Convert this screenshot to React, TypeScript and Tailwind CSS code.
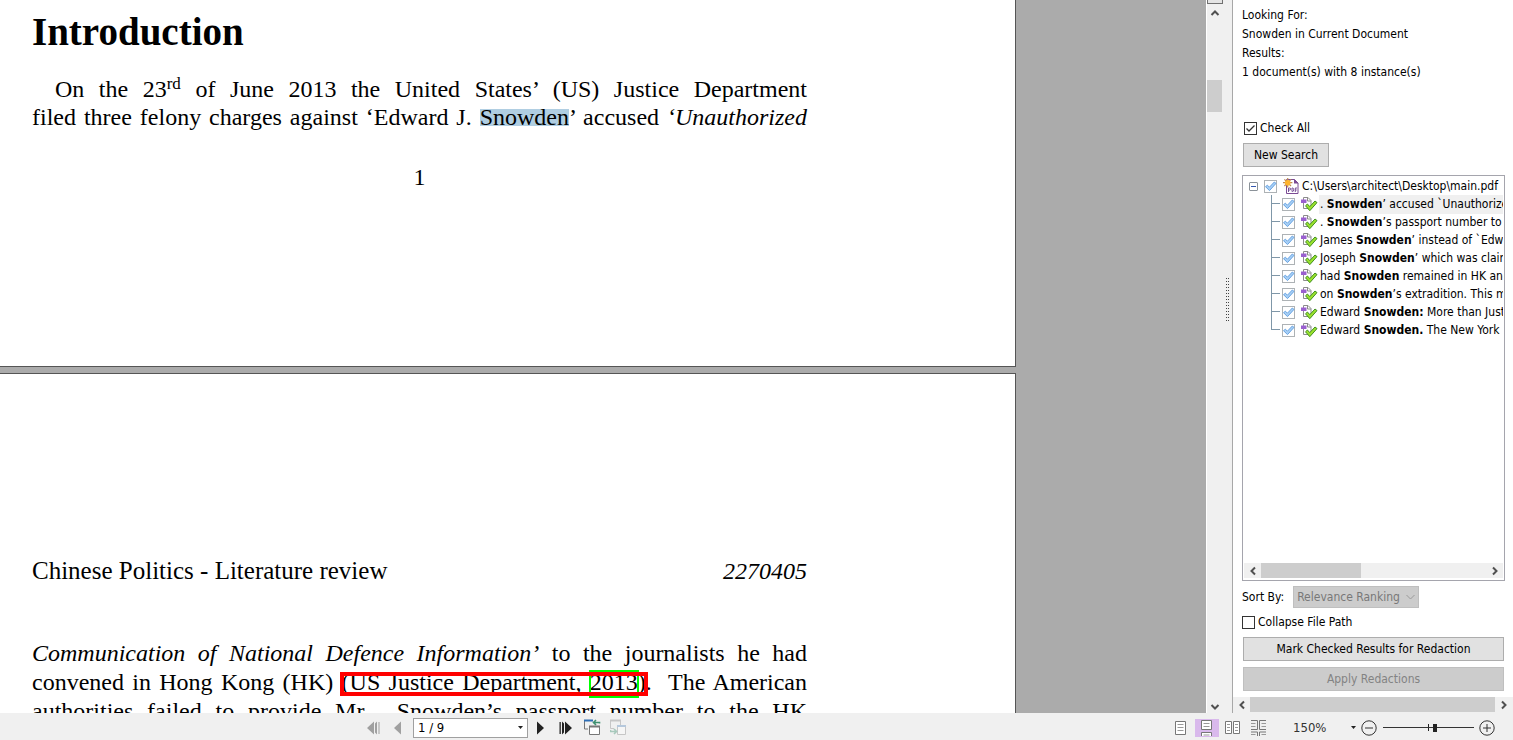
import type { ReactNode } from "react";

const UI = "font-['DejaVu_Sans_Condensed','Noto_Sans',sans-serif]";

type Instance = { before: string; match: string; after: string };

const INSTANCES: Instance[] = [
  { before: ". ", match: "Snowden", after: "’ accused `Unauthorized" },
  { before: ". ", match: "Snowden", after: "’s passport number to the" },
  { before: "James ", match: "Snowden", after: "’ instead of `Edward" },
  { before: "Joseph ", match: "Snowden", after: "’ which was claimed" },
  { before: "had ", match: "Snowden", after: " remained in HK and" },
  { before: "on ", match: "Snowden", after: "’s extradition. This meant" },
  { before: "Edward ", match: "Snowden:", after: " More than Just" },
  { before: "Edward ", match: "Snowden.", after: " The New York" },
];

function Chevron({ d, className = "" }: { d: string; className?: string }) {
  return (
    <svg width="10" height="10" viewBox="0 0 10 10" fill="none" stroke="#505050" strokeWidth="2" className={className} aria-hidden="true">
      <path d={d} />
    </svg>
  );
}
const UP = "M1.5 7 5 3.5 8.5 7";
const DOWN = "M1.5 3 5 6.5 8.5 3";
const LEFT = "M7 1.5 3.5 5 7 8.5";
const RIGHT = "M3 1.5 6.5 5 3 8.5";

function TreeCheck({ label }: { label: string }) {
  return (
    <span className="grid shrink-0 place-items-center">
      <input
        type="checkbox"
        defaultChecked
        aria-label={label}
        className="peer col-start-1 row-start-1 size-[13px] appearance-none border border-[#adb2b5] bg-white"
      />
      <svg width="13" height="13" viewBox="0 0 13 13" className="pointer-events-none invisible col-start-1 row-start-1 peer-checked:visible" aria-hidden="true">
        <path d="M1.500 6.700 3.400 5.200 5.400 7.200 10.300 2 12 3.400 5.500 10.600Z" fill="#a9d0f5" stroke="#5a9be0" strokeWidth="0.9" />
      </svg>
    </span>
  );
}

function BoxCheck({ id, checked }: { id: string; checked?: boolean }) {
  return (
    <span className="grid shrink-0 place-items-center">
      <input
        id={id}
        type="checkbox"
        defaultChecked={checked}
        className="peer col-start-1 row-start-1 size-[13px] appearance-none border border-[#333] bg-white"
      />
      <svg width="13" height="13" viewBox="0 0 13 13" fill="none" stroke="#333" strokeWidth="1.3" className="pointer-events-none invisible col-start-1 row-start-1 peer-checked:visible" aria-hidden="true">
        <path d="M2.5 6.5 5 9 10.5 3.5" />
      </svg>
    </span>
  );
}

function PdfIcon() {
  return (
    <svg width="16" height="16" viewBox="0 0 16 16" className="shrink-0" aria-hidden="true">
      <path d="M3.500 1.500h8l3.500 3.500v10.500h-11.500z" fill="#fff" stroke="#7b4b94" />
      <path d="M11 1v4.500h4.500z" fill="#7b4b94" />
      <path d="M4.700 0v9.400M0 4.700h9.400M1.400 1.400l6.600 6.600M8 1.400 1.400 8" stroke="#c08a50" strokeWidth="1.200" />
      <circle cx="4.700" cy="4.700" r="2.800" fill="#ffb52e" />
      <g fill="none" stroke="#6b3f8f" strokeWidth="0.900">
        <path d="M5.500 14V10h1.200q.9 0 .9 1t-.9 1H5.500" />
        <path d="M9 10v3.500h.6q1.100 0 1.100-1.750T9.600 10z" />
        <path d="M12.300 14V10h1.700M12.300 12h1.400" />
      </g>
    </svg>
  );
}

function InstanceIcon() {
  return (
    <svg width="17" height="16" viewBox="0 0 17 16" className="shrink-0" aria-hidden="true">
      <path d="M2.500 1.500h4.500l3 3v8h-7.500z" fill="#fff" stroke="#8c8c8c" />
      <path d="M6.500 1.500v3.500h3.500" fill="none" stroke="#8c8c8c" />
      <path d="M0 3.500h5.500v3.500H0z" fill="#9a5fd0" />
      <path d="M4.500 9.800 6.400 8 8.800 10.600 14 5 16 6.600 8.800 14.700Z" fill="#9be22d" stroke="#3f8f1f" strokeWidth="1" />
    </svg>
  );
}

function BarButton({ label, className = "", children }: { label: string; className?: string; children: ReactNode }) {
  return (
    <button type="button" aria-label={label} className={`flex items-center justify-center ${className}`}>
      {children}
    </button>
  );
}

function Line({ children, className = "" }: { children: ReactNode; className?: string }) {
  return <div className={`[text-align-last:justify] whitespace-nowrap ${className}`}>{children}</div>;
}

function DocumentView() {
  return (
    <main className="min-w-0 flex-1 overflow-hidden bg-[#ababab] font-['Liberation_Serif',serif] text-2xl/7 text-black">
      <article className="mr-[190px] border-r border-b border-[#555] bg-white pr-[208px] pb-[175px] pl-8">
        <h1 className="pt-2 text-[39px]/[48px] font-bold">Introduction</h1>
        <Line className="mt-[19px] pl-[23px]">
          On the 23<sup className="-top-2 text-[17px]/none">rd</sup> of June 2013 the United States’ (US) Justice Department
        </Line>
        <Line>
          filed three felony charges against ‘Edward J.{" "}
          <mark className="bg-transparent bg-[linear-gradient(#b0cee2,#b0cee2)] bg-[length:100%_17px] bg-[position:0_5px] bg-no-repeat text-black">Snowden</mark>’ accused{" "}
          <em>‘Unauthorized</em>
        </Line>
        <p className="mt-8 text-center">1</p>
      </article>
      <article className="mt-1.5 mr-[190px] border-t border-r border-[#555] bg-white pr-[208px] pl-8">
        <header className="flex justify-between pt-[183px]">
          <span className="text-[25px]/7">Chinese Politics - Literature review</span>
          <em>2270405</em>
        </header>
        <Line className="mt-[54px] leading-[29px]">
          <em>Communication of National Defence Information’</em> to the journalists he had
        </Line>
        <Line className="leading-[29px]">
          convened in Hong Kong (HK){" "}
          <span className="relative">
            (US Justice Department,{" "}
            <span className="relative">
              2013
              <span className="absolute -inset-x-px top-px -bottom-[3px] border-2 border-[#00ff00]" />
            </span>
            )
            <span className="absolute -inset-x-0.5 top-[3px] -bottom-px border-4 border-[#ff0000]" />
          </span>
          .&nbsp; The American
        </Line>
        <Line className="leading-[29px]">authorities failed to provide Mr.&nbsp; Snowden’s passport number to the HK</Line>
      </article>
    </main>
  );
}

function VerticalScroll() {
  return (
    <div className="flex w-[17px] shrink-0 flex-col border-l border-white bg-[#f0f0f0]">
      <div className="h-1 w-full border border-t-0 border-[#707070] bg-[#e4e4e4]" />
      <BarButton label="Scroll up" className="h-[18px] w-[15px]">
        <Chevron d={UP} />
      </BarButton>
      <div className="mt-[58px] h-8 w-[15px] bg-[#cdcdcd]" />
      <BarButton label="Scroll down" className="mt-auto h-3 w-[15px]">
        <Chevron d={DOWN} />
      </BarButton>
    </div>
  );
}

function Splitter() {
  return (
    <div className="flex w-[9px] shrink-0 items-center justify-center bg-[#f0f0f0]">
      <svg width="3" height="45" aria-hidden="true" className="-mt-28">
        <defs>
          <pattern id="grip" width="2" height="3" patternUnits="userSpaceOnUse">
            <path d="M0 0h1v1H0z" fill="#444" />
          </pattern>
        </defs>
        <rect width="3" height="45" fill="url(#grip)" />
      </svg>
    </div>
  );
}

function ResultTree() {
  return (
    <div className="mt-2 flex flex-1 flex-col border border-[#a5a5ad] bg-white p-px">
      <div className="flex-1 overflow-hidden whitespace-nowrap">
        <div className="flex h-[18px] items-center pl-[5px]">
          <button type="button" aria-label="Collapse main.pdf" className="grid size-[9px] place-items-center rounded-[1px] border border-[#8b9299]">
            <span className="h-px w-[5px] bg-[#3558b0]" />
          </button>
          <span className="ml-1.5 flex">
            <TreeCheck label="C:\Users\architect\Desktop\main.pdf" />
          </span>
          <span className="mr-[3px] ml-1.5">
            <PdfIcon />
          </span>
          <span>C:\Users\architect\Desktop\main.pdf</span>
        </div>
        <ul>
          {INSTANCES.map((it, i) => (
            <li key={i} className="flex h-[18px] items-center pl-[27px]">
              <span className="flex h-full w-[11px] shrink-0 flex-col">
                <span className="h-[9px] w-[9px] border-b border-l border-[#7f97a8]" />
                <span className={i === INSTANCES.length - 1 ? "flex-1" : "flex-1 border-l border-[#7f97a8]"} />
              </span>
              <TreeCheck label={`${it.before}${it.match}`} />
              <span className="ml-1.5 shrink-0">
                <InstanceIcon />
              </span>
              <span className={i === 0 ? "ml-px flex-1 bg-[#f0f0f0] pl-px" : "ml-px flex-1 pl-px"}>
                {it.before}
                <b>{it.match}</b>
                {it.after}
              </span>
            </li>
          ))}
        </ul>
      </div>
      <div className="mb-px flex h-[15px] items-center bg-[#f0f0f0]">
        <BarButton label="Scroll results left" className="h-full w-[17px]">
          <Chevron d={LEFT} />
        </BarButton>
        <div className="h-full w-[100px] bg-[#cdcdcd]" />
        <BarButton label="Scroll results right" className="ml-auto h-full w-[17px]">
          <Chevron d={RIGHT} />
        </BarButton>
      </div>
    </div>
  );
}

function SearchPanel() {
  return (
    <aside className={`flex w-[281px] shrink-0 flex-col border-l border-[#a8a8a8] bg-white text-xs/[19px] text-black ${UI}`}>
      <div className="flex flex-1 flex-col pt-1.5 pr-2 pl-[9px]">
        <div>
          <p>Looking For:</p>
          <p>Snowden in Current Document</p>
          <p>Results:</p>
          <p>1 document(s) with 8 instance(s)</p>
        </div>
        <label htmlFor="check-all" className="mt-[37px] flex items-center gap-[3px] pl-0.5">
          <BoxCheck id="check-all" checked />
          Check All
        </label>
        <button type="button" className="mt-[5px] ml-px h-6 w-[86px] border border-[#adadad] bg-[#e1e1e1]">
          New Search
        </button>
        <ResultTree />
        <div className="mt-[5px] flex items-center gap-[9px]">
          <label htmlFor="sort-by">Sort By:</label>
          <span className="grid items-center">
            <select
              id="sort-by"
              disabled
              className="col-start-1 row-start-1 h-[22px] w-[126px] appearance-none border border-[#bfbfbf] bg-[#cccccc] pl-[3px] text-[#787878] opacity-100"
            >
              <option>Relevance Ranking</option>
            </select>
            <svg width="9" height="6" viewBox="0 0 9 6" fill="none" stroke="#9a9a9a" className="pointer-events-none col-start-1 row-start-1 mr-1 justify-self-end" aria-hidden="true">
              <path d="M.5 1 4.5 5 8.5 1" />
            </svg>
          </span>
        </div>
        <label htmlFor="collapse" className="mt-[5px] flex items-center gap-[3px]">
          <BoxCheck id="collapse" />
          Collapse File Path
        </label>
        <button type="button" className="mx-px mt-[5px] h-6 border border-[#adadad] bg-[#e1e1e1]">
          Mark Checked Results for Redaction
        </button>
        <button type="button" disabled className="mx-px my-1.5 h-6 border border-[#bfbfbf] bg-[#cccccc] text-[#838383]">
          Apply Redactions
        </button>
      </div>
      <div className="flex h-4 shrink-0 bg-[#f0f0f0]">
        <BarButton label="Scroll panel left" className="w-[17px]">
          <Chevron d={LEFT} />
        </BarButton>
        <div className="mb-px flex-1 bg-[#cdcdcd]" />
        <BarButton label="Scroll panel right" className="w-[18px]">
          <Chevron d={RIGHT} />
        </BarButton>
      </div>
    </aside>
  );
}

function StatusBar() {
  return (
    <footer className={`flex h-[27px] shrink-0 items-center justify-between bg-[#f0f0f0] pt-0.5 pr-[18px] pl-[366px] text-[13px] text-black ${UI}`}>
      <nav className="flex items-center" aria-label="Page navigation">
        <BarButton label="First page">
          <svg width="14" height="14" viewBox="0 0 14 14" fill="#a0a0a0"><path d="M8 .5v13L1 7zM11 .5v13L9 11.500V2.500zM12.500 1h1v12h-1z" /></svg>
        </BarButton>
        <BarButton label="Previous page" className="ml-3">
          <svg width="10" height="14" viewBox="0 0 10 14" fill="#a0a0a0"><path d="M9 .5v13L2 7z" /></svg>
        </BarButton>
        <span className="ml-[11px] grid items-center">
          <input aria-label="Page" defaultValue="1 / 9" className="col-start-1 row-start-1 h-5 w-[115px] border border-[#a0a0a0] bg-white pl-1" />
          <svg width="5" height="3" className="col-start-1 row-start-1 mr-[5px] justify-self-end" aria-hidden="true"><path d="M0 0h5L2.500 3z" fill="#222" /></svg>
        </span>
        <BarButton label="Next page" className="ml-2">
          <svg width="10" height="14" viewBox="0 0 10 14" fill="#222"><path d="M1 .5v13L8 7z" /></svg>
        </BarButton>
        <BarButton label="Last page" className="ml-[13px]">
          <svg width="14" height="14" viewBox="0 0 14 14" fill="#222"><path d="M6 .5v13L13 7zM3 .5v13l2-2V2.500zM.5 1h1.300v12H.5z" /></svg>
        </BarButton>
        <BarButton label="Previous view" className="ml-[11px]">
          <svg width="17" height="17" viewBox="0 0 17 17" fill="none">
            <path d="M9 1.5H.5V10H4" stroke="#777" />
            <path d="M0 1.5h9" stroke="#2f6fb5" strokeWidth="2" />
            <path d="M5.500 7.500h10v8h-10z" fill="#fff" stroke="#777" />
            <path d="M5 7.5h11" stroke="#777" strokeWidth="2" />
            <path d="M15.500 4.500V3.500H10M12 1 9.500 3.500 12 6" stroke="#3f9070" strokeWidth="1.6" />
          </svg>
        </BarButton>
        <BarButton label="Next view" className="ml-[9px]">
          <svg width="17" height="17" viewBox="0 0 17 17" fill="none" opacity="0.4">
            <path d="M4 9.500H.5V1.500h10V6" stroke="#888" />
            <path d="M0 1.500h11" stroke="#888" strokeWidth="2" />
            <path d="M7.500 6.500h8v9h-8z" fill="#fff" stroke="#888" />
            <path d="M7 7h9" stroke="#5f8fc0" strokeWidth="2" />
            <path d="M.5 11v1.500H6M4 10 6.500 12.500 4 15" stroke="#3f9070" strokeWidth="1.6" />
          </svg>
        </BarButton>
      </nav>
      <div className="flex items-center">
        <BarButton label="Single page">
          <svg width="12" height="14" viewBox="0 0 12 14" fill="none" stroke="#777"><path d="M.5.5h10v13H.5z" fill="#fff" /><path d="M2.500 3.500h6M2.500 6.500h6M2.500 9.500h6" stroke="#999" /></svg>
        </BarButton>
        <BarButton label="Continuous" className="ml-2 h-[18px] w-6 bg-[#d9b9ec]">
          <svg width="12" height="16" viewBox="0 0 12 16" fill="none" stroke="#777"><path d="M.5.5h10v9H.5z" fill="#fff" /><path d="M2.500 3.500h6M2.500 6.500h6" stroke="#999" /><path d="M.5 16v-3.500h10V16" fill="#fff" /><path d="M2.500 15h6" stroke="#999" /></svg>
        </BarButton>
        <BarButton label="Facing" className="ml-1.5">
          <svg width="16" height="14" viewBox="0 0 16 14" fill="none" stroke="#777"><path d="M.5.5h6v12h-6zM8.500.5h6v12h-6z" fill="#fff" /><path d="M2 3.500h3M2 6.500h3M2 9.500h3M10 3.500h3M10 6.500h3M10 9.500h3" stroke="#999" /></svg>
        </BarButton>
        <BarButton label="Continuous facing" className="ml-2.5">
          <svg width="16" height="16" viewBox="0 0 16 16" fill="none" stroke="#777"><path d="M0 .5h6.500v9H0M15 .5H8.500v9H15M0 12h6.500v4M15 12H8.500v4" /><path d="M0 3.500h4.500M0 6.500h4.500M10.500 3.500H15M10.500 6.500H15M0 14.500h4.500M10.500 14.500H15" stroke="#999" /></svg>
        </BarButton>
        <button type="button" className="ml-[26px] flex w-[63px] items-center justify-between text-[#333]">
          150%
          <svg width="5" height="3" aria-hidden="true"><path d="M0 0h5L2.500 3z" fill="#222" /></svg>
        </button>
        <BarButton label="Zoom out" className="ml-[5px]">
          <svg width="16" height="16" viewBox="0 0 16 16" fill="none" stroke="#333"><circle cx="8" cy="8" r="7.2" /><path d="M4 8h8" /></svg>
        </BarButton>
        <span className="mx-[5px] ml-1.5 grid items-center">
          <span className="col-start-1 row-start-1 ml-[45px] h-[7px] w-px bg-[#222]" />
          <input
            type="range"
            aria-label="Zoom"
            min={0}
            max={100}
            defaultValue={57}
            className="col-start-1 row-start-1 h-2 w-[91px] appearance-none bg-[linear-gradient(#333,#333)] bg-[length:100%_1px] bg-center bg-no-repeat [&::-webkit-slider-thumb]:h-2 [&::-webkit-slider-thumb]:w-1 [&::-webkit-slider-thumb]:appearance-none [&::-webkit-slider-thumb]:bg-[#222]"
          />
        </span>
        <BarButton label="Zoom in">
          <svg width="16" height="16" viewBox="0 0 16 16" fill="none" stroke="#333"><circle cx="8" cy="8" r="7.2" /><path d="M4 8h8M8 4v8" /></svg>
        </BarButton>
      </div>
    </footer>
  );
}

export default function App() {
  return (
    <div className="flex h-screen flex-col overflow-hidden bg-[#f0f0f0]">
      <div className="flex min-h-0 flex-1">
        <DocumentView />
        <VerticalScroll />
        <Splitter />
        <SearchPanel />
      </div>
      <StatusBar />
    </div>
  );
}
